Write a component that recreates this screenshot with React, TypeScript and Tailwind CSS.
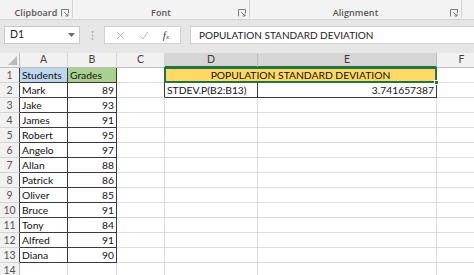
import React from 'react';

const cellFont = { fontFamily: 'Lato, "Liberation Sans", sans-serif' };
const uiFont = { fontFamily: '"Open Sans", "Liberation Sans", sans-serif' };

const students: [string, number][] = [
  ['Mark', 89],
  ['Jake', 93],
  ['James', 91],
  ['Robert', 95],
  ['Angelo', 97],
  ['Allan', 88],
  ['Patrick', 86],
  ['Oliver', 85],
  ['Bruce', 91],
  ['Tony', 84],
  ['Alfred', 91],
  ['Diana', 90],
];

const Launcher = () => (
  <svg width="8" height="8" viewBox="0 0 8 8" className="text-[#7a7a7a]">
    <path d="M0.5 7.5V0.5H7.5V4" fill="none" stroke="currentColor" strokeWidth="1" />
    <path d="M3 3L7 7M7 4.5V7H4.5" fill="none" stroke="currentColor" strokeWidth="1" />
  </svg>
);

const RibbonGroup = ({ label, width, launcher }: { label: string; width: string; launcher?: boolean }) => (
  <div className={`${width} relative h-[18px] flex items-end justify-center border-r border-[#d4d4d4] shrink-0`}>
    <span className="text-[9px] leading-[11px] font-semibold text-[#555] tracking-[0.1px]">{label}</span>
    {launcher && (
      <span className="absolute right-[3px] top-[9px]">
        <Launcher />
      </span>
    )}
  </div>
);

const ColHead = ({ label, selected }: { label: string; selected?: boolean }) => (
  <div
    className={`flex items-center justify-center text-[10.5px] border-r ${
      selected
        ? 'bg-[#d6d6d6] text-[#3b3b3b] border-[#bdbdbd] border-b-2 border-b-[#217346]'
        : 'bg-[#f1f1f1] text-[#444] border-[#d4d4d4] border-b border-b-[#bdbdbd]'
    }`}
  >
    {label}
  </div>
);

const RowHead = ({ n, dark }: { n: number; dark?: boolean }) => (
  <div
    className={`flex items-end justify-center pb-[1px] text-[10.5px] leading-[12px] text-[#555] bg-[#f1f1f1] border-b border-[#d4d4d4] border-r ${
      dark ? 'border-r-[#3f3f3f]' : 'border-r-[#bdbdbd]'
    } ${n === 1 ? 'bg-[#e4e4e4]' : ''}`}
  >
    {n}
  </div>
);

const Cell = ({
  children,
  right,
  bordered,
  bg,
  className = '',
}: {
  children?: React.ReactNode;
  right?: boolean;
  bordered?: boolean;
  bg?: string;
  className?: string;
}) => (
  <div
    className={`flex items-end px-[2px] pb-[1px] text-[10.3px] leading-[12px] text-[#111] border-r border-b whitespace-nowrap overflow-visible ${
      right ? 'justify-end' : 'justify-start'
    } ${bordered ? 'border-[#3a3a3a]' : 'border-[#dcdcdc]'} ${bg ?? 'bg-white'} ${className}`}
  >
    {children}
  </div>
);

export default function App() {
  return (
    <div className="w-[474px] h-[275px] overflow-hidden bg-white select-none" style={uiFont}>
      {/* ribbon group labels */}
      <div className="h-[20px] flex items-start bg-[#f3f3f3] border-b border-[#d2d2d2]">
        <RibbonGroup label="Clipboard" width="w-[73px]" launcher />
        <RibbonGroup label="Font" width="w-[177px]" launcher />
        <RibbonGroup label="Alignment" width="w-[212px]" launcher />
        <div className="flex-1" />
      </div>

      {/* name box + formula bar */}
      <div className="h-[33px] bg-[#e6e6e6] flex items-start pt-[6px] pl-[4px]">
        <div className="w-[76px] h-[18px] bg-white border border-[#c8c8c8] flex items-center justify-between pl-[5px] pr-[4px]">
          <span className="text-[10.5px] text-[#222]" style={cellFont}>
            D1
          </span>
          <svg width="7" height="4" viewBox="0 0 7 4">
            <path d="M0 0H7L3.5 4Z" fill="#6b6b6b" />
          </svg>
        </div>
        <div className="w-[24px] h-[18px] flex items-center justify-center">
          <svg width="3" height="9" viewBox="0 0 3 9">
            <circle cx="1.5" cy="1" r="0.9" fill="#a8a8a8" />
            <circle cx="1.5" cy="4.5" r="0.9" fill="#a8a8a8" />
            <circle cx="1.5" cy="8" r="0.9" fill="#a8a8a8" />
          </svg>
        </div>
        <div className="w-[77px] h-[18px] bg-white border border-[#d0d0d0] flex items-center justify-around px-[4px]">
          <svg width="9" height="9" viewBox="0 0 9 9">
            <path d="M1 1L8 8M8 1L1 8" stroke="#b9b9b9" strokeWidth="1" />
          </svg>
          <svg width="10" height="9" viewBox="0 0 10 9">
            <path d="M1 5L3.8 8L9 1" fill="none" stroke="#b9b9b9" strokeWidth="1" />
          </svg>
          <span className="text-[11px] italic text-[#444]" style={{ fontFamily: '"Liberation Serif", serif' }}>
            f<span className="text-[7px]">x</span>
          </span>
        </div>
        <div className="ml-[9px] flex-1 h-[18px] bg-white border border-[#d0d0d0] border-r-0 flex items-center pl-[8px]">
          <span className="text-[10px] text-[#222]" style={cellFont}>
            POPULATION STANDARD DEVIATION
          </span>
        </div>
      </div>

      {/* sheet */}
      <div
        className="grid grid-cols-[20px_48px_49px_48px_93px_179px_50px] grid-rows-[15px_repeat(14,15px)]"
        style={cellFont}
      >
        {/* corner */}
        <div className="bg-[#f1f1f1] border-r border-b border-[#bdbdbd] flex items-end justify-end pr-[2px] pb-[2px]">
          <svg width="9" height="9" viewBox="0 0 9 9">
            <path d="M9 0V9H0Z" fill="#b9b9b9" />
          </svg>
        </div>
        <ColHead label="A" />
        <ColHead label="B" />
        <ColHead label="C" />
        <ColHead label="D" selected />
        <ColHead label="E" selected />
        <ColHead label="F" />

        {/* row 1 */}
        <RowHead n={1} dark />
        <Cell bordered bg="bg-[#bdd7ee]">Students</Cell>
        <Cell bordered bg="bg-[#a9d08e]">Grades</Cell>
        <Cell className="border-r-[#3a3a3a]" />
        <div className="col-span-2 relative bg-[#ffd966] border-r border-b border-[#3a3a3a] flex items-end justify-center pb-[1px] text-[10.3px] leading-[12px] text-[#111]">
          POPULATION STANDARD DEVIATION
          <div className="absolute -left-px -top-px -right-px -bottom-px border-2 border-[#217346] pointer-events-none" />
          <div className="absolute -right-[3px] -bottom-[3px] w-[5px] h-[5px] bg-[#217346] border border-white" />
        </div>
        <Cell />

        {/* row 2 */}
        <RowHead n={2} dark />
        <Cell bordered>{students[0][0]}</Cell>
        <Cell bordered right>
          {students[0][1]}
        </Cell>
        <Cell className="border-r-[#3a3a3a]" />
        <Cell bordered>STDEV.P(B2:B13)</Cell>
        <Cell bordered right>
          3.741657387
        </Cell>
        <Cell />

        {/* rows 3-13 */}
        {students.slice(1).map(([name, grade], i) => (
          <React.Fragment key={name}>
            <RowHead n={i + 3} dark />
            <Cell bordered>{name}</Cell>
            <Cell bordered right>
              {grade}
            </Cell>
            <Cell />
            <Cell />
            <Cell />
            <Cell />
          </React.Fragment>
        ))}

        {/* row 14 */}
        <RowHead n={14} />
        <Cell />
        <Cell />
        <Cell />
        <Cell />
        <Cell />
        <Cell />
      </div>
    </div>
  );
}
